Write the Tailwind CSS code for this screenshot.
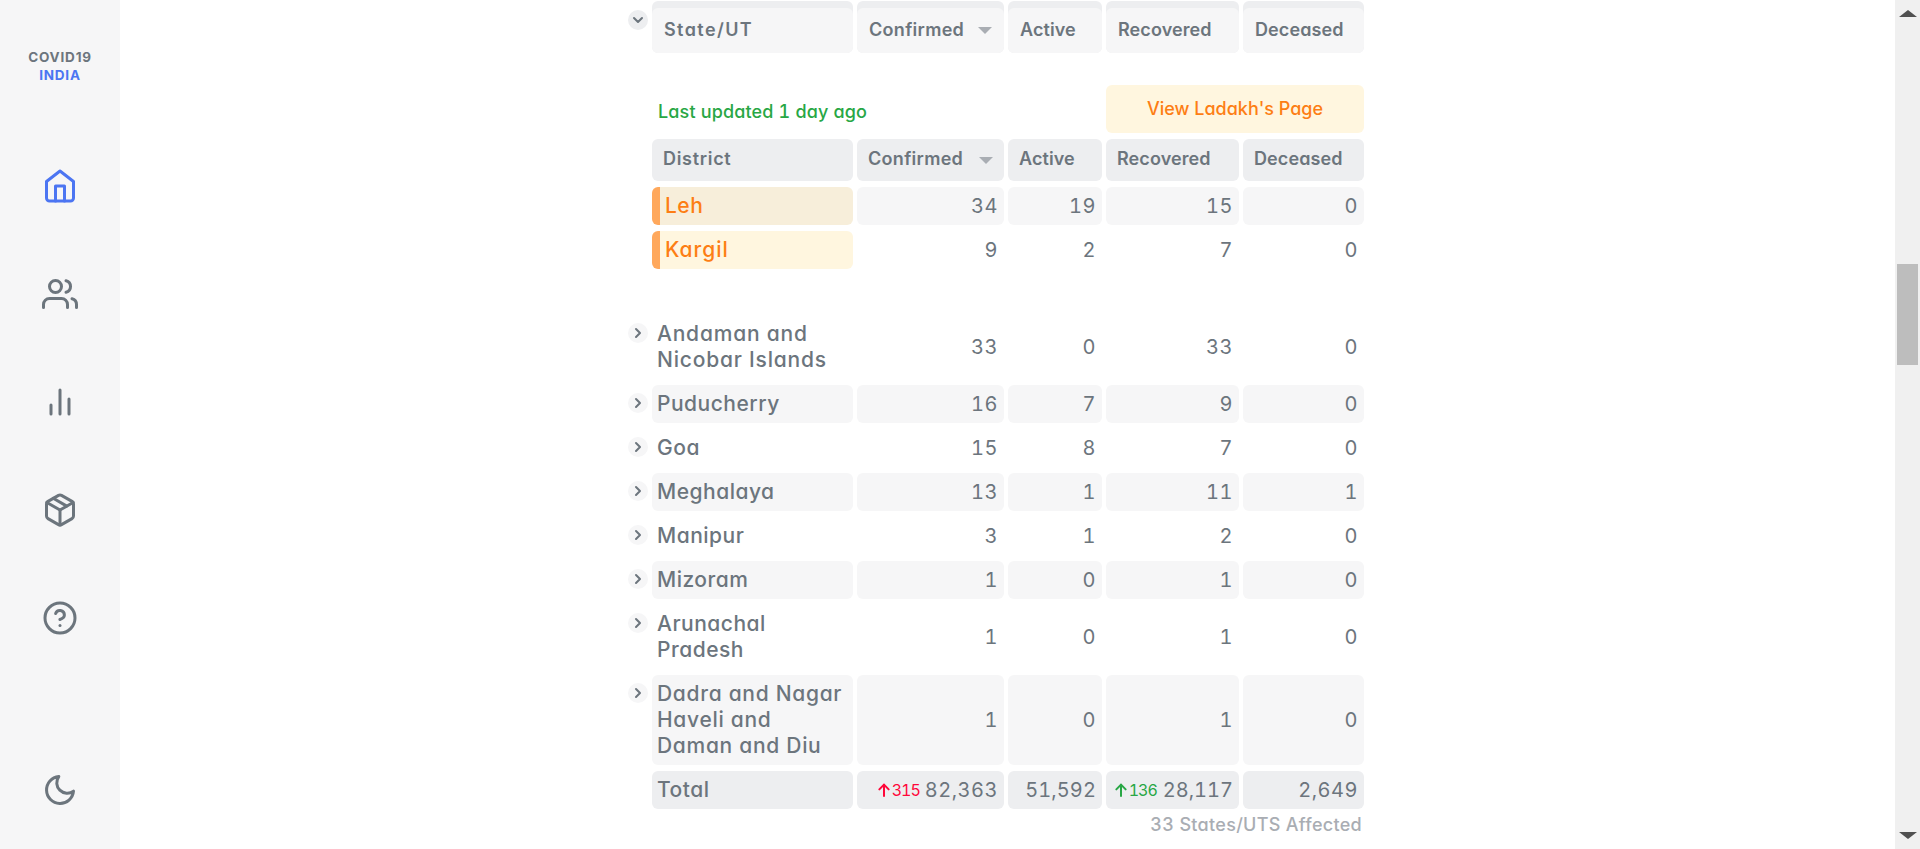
<!DOCTYPE html>
<html lang="en" class="h-[849px] overflow-hidden">
<head>
    <meta charset="UTF-8">
    <meta name="viewport" content="width=device-width, initial-scale=1.0">
    <title>COVID19 India</title>
    <script src="https://cdn.jsdelivr.net/npm/@tailwindcss/browser@4"></script>
</head>
<body class="h-[849px] overflow-hidden bg-white font-['Inter',sans-serif] text-[#6c757d] [font-feature-settings:'cv11']">
<div class="flex h-[849px]">

    <!-- Sidebar -->
    <nav class="flex w-[120px] shrink-0 flex-col items-center bg-[#f6f6f7] pt-[48px] pb-[41px]">
        <div class="text-center text-[13.5px] leading-[18px] font-bold tracking-[0.8px]">
            <div>COVID19</div>
            <div class="text-[#4c75f2]">INDIA</div>
        </div>
        <div class="mt-[84px] flex flex-col items-center gap-[72px]">
            <svg class="size-9 text-[#4c75f2]" viewBox="0 0 24 24" fill="none" stroke="currentColor" stroke-width="2" stroke-linecap="round" stroke-linejoin="round"><path d="M3 9l9-7 9 7v11a2 2 0 0 1-2 2H5a2 2 0 0 1-2-2z"/><polyline points="9 22 9 12 15 12 15 22"/></svg>
            <svg class="size-9" viewBox="0 0 24 24" fill="none" stroke="currentColor" stroke-width="2" stroke-linecap="round" stroke-linejoin="round"><path d="M17 21v-2a4 4 0 0 0-4-4H5a4 4 0 0 0-4 4v2"/><circle cx="9" cy="7" r="4"/><path d="M23 21v-2a4 4 0 0 0-3-3.87"/><path d="M16 3.13a4 4 0 0 1 0 7.75"/></svg>
            <svg class="size-9" viewBox="0 0 24 24" fill="none" stroke="currentColor" stroke-width="2" stroke-linecap="round" stroke-linejoin="round"><line x1="18" y1="20" x2="18" y2="10"/><line x1="12" y1="20" x2="12" y2="4"/><line x1="6" y1="20" x2="6" y2="14"/></svg>
            <svg class="size-9" viewBox="0 0 24 24" fill="none" stroke="currentColor" stroke-width="2" stroke-linecap="round" stroke-linejoin="round"><line x1="16.5" y1="9.4" x2="7.5" y2="4.21"/><path d="M21 16V8a2 2 0 0 0-1-1.73l-7-4a2 2 0 0 0-2 0l-7 4A2 2 0 0 0 3 8v8a2 2 0 0 0 1 1.73l7 4a2 2 0 0 0 2 0l7-4A2 2 0 0 0 21 16z"/><polyline points="3.27 6.96 12 12.01 20.73 6.96"/><line x1="12" y1="22.08" x2="12" y2="12"/></svg>
            <svg class="size-9" viewBox="0 0 24 24" fill="none" stroke="currentColor" stroke-width="2" stroke-linecap="round" stroke-linejoin="round"><circle cx="12" cy="12" r="10"/><path d="M9.09 9a3 3 0 0 1 5.83 1c0 2-3 3-3 3"/><line x1="12" y1="17" x2="12.01" y2="17"/></svg>
        </div>
        <svg class="mt-auto size-9" viewBox="0 0 24 24" fill="none" stroke="currentColor" stroke-width="2" stroke-linecap="round" stroke-linejoin="round"><path d="M21 12.79A9 9 0 1 1 11.21 3 7 7 0 0 0 21 12.79z"/></svg>
    </nav>

    <!-- Table -->
    <main class="min-w-0 flex-1 pt-px pl-[508px] text-[20px] leading-[26px] tracking-[0.5px] [font-feature-settings:'cv11','tnum']">
        <div class="w-[736px]">

            <!-- State header -->
            <div class="grid grid-cols-[20px_201px_147px_94px_133px_121px] gap-x-[4px] text-[18px] font-semibold">
                <span class="mt-[9px] flex size-5 items-center justify-center rounded-full bg-[#edeef0]">
                    <svg class="size-4" viewBox="0 0 24 24" fill="none" stroke="currentColor" stroke-width="3" stroke-linecap="round" stroke-linejoin="round"><polyline points="6 9 12 15 18 9"/></svg>
                </span>
                <div class="rounded-md bg-[#edeef0] pt-[7px]"><div class="flex h-[45px] items-center rounded-md bg-[#f6f6f7] px-3 pb-[2px] tracking-[1.4px]">State/UT</div></div>
                <div class="rounded-md bg-[#edeef0] pt-[7px]"><div class="flex h-[45px] items-center justify-between rounded-md bg-[#f6f6f7] pr-[12px] pb-[2px] pl-3 tracking-[0.3px]">Confirmed<span class="mt-[2px] border-x-[7px] border-t-[7px] border-x-transparent border-t-[#a9adb3]"></span></div></div>
                <div class="rounded-md bg-[#edeef0] pt-[7px]"><div class="flex h-[45px] items-center rounded-md bg-[#f6f6f7] px-3 pb-[2px] tracking-[0.1px]">Active</div></div>
                <div class="rounded-md bg-[#edeef0] pt-[7px]"><div class="flex h-[45px] items-center rounded-md bg-[#f6f6f7] px-3 pb-[2px] tracking-[0.1px]">Recovered</div></div>
                <div class="rounded-md bg-[#edeef0] pt-[7px]"><div class="flex h-[45px] items-center rounded-md bg-[#f6f6f7] px-3 pb-[2px] tracking-[0.1px]">Deceased</div></div>
            </div>

            <!-- Districts of Ladakh -->
            <div class="mt-[32px] pl-[24px]">
                <div class="flex h-[48px] items-end justify-between">
                    <span class="pb-[9px] pl-[6px] text-[18px] leading-[24px] font-medium tracking-[0.15px] text-[#28a745]">Last updated 1 day ago</span>
                    <a class="flex h-[48px] w-[258px] items-center justify-center rounded-md bg-[#fff6df] text-[18px] font-medium tracking-normal text-[#fd7e14]">View Ladakh's Page</a>
                </div>
                <div class="mt-[6px] grid grid-cols-[201px_147px_94px_133px_121px] gap-x-[4px] text-[18px] font-semibold">
                    <div class="flex h-[42px] items-center rounded-md bg-[#edeef0] px-[11px] pb-[2px] tracking-[0.7px]">District</div>
                    <div class="flex h-[42px] items-center justify-between rounded-md bg-[#edeef0] pr-[11px] pb-[2px] pl-[11px] tracking-[0.3px]">Confirmed<span class="mt-[2px] border-x-[7px] border-t-[7px] border-x-transparent border-t-[#a9adb3]"></span></div>
                    <div class="flex h-[42px] items-center rounded-md bg-[#edeef0] px-[11px] pb-[2px] tracking-[0.1px]">Active</div>
                    <div class="flex h-[42px] items-center rounded-md bg-[#edeef0] px-[11px] pb-[2px] tracking-[0.1px]">Recovered</div>
                    <div class="flex h-[42px] items-center rounded-md bg-[#edeef0] px-[11px] pb-[2px] tracking-[0.1px]">Deceased</div>
                </div>
                <div class="mt-[6px] grid grid-cols-[201px_147px_94px_133px_121px] gap-x-[4px] gap-y-[6px]">
                    <div class="flex items-center rounded-md border-l-[8px] border-[#ffa85c] bg-[#f7eeda] py-[6px] pl-[5px] text-[21px] font-medium text-[#fd7e14]">Leh</div>
                    <div class="rounded-md bg-[#f6f6f7] px-[6px] py-[6px] text-right">34</div>
                    <div class="rounded-md bg-[#f6f6f7] px-[6px] py-[6px] text-right">19</div>
                    <div class="rounded-md bg-[#f6f6f7] px-[6px] py-[6px] text-right">15</div>
                    <div class="rounded-md bg-[#f6f6f7] px-[6px] py-[6px] text-right">0</div>
                    <div class="flex items-center rounded-md border-l-[8px] border-[#ffa85c] bg-[#fff6df] py-[6px] pl-[5px] text-[21px] font-medium tracking-[1px] text-[#fd7e14]">Kargil</div>
                    <div class="px-[6px] py-[6px] text-right">9</div>
                    <div class="px-[6px] py-[6px] text-right">2</div>
                    <div class="px-[6px] py-[6px] text-right">7</div>
                    <div class="px-[6px] py-[6px] text-right">0</div>
                </div>
            </div>

            <!-- Remaining states -->
            <div class="mt-[46px] grid grid-cols-[20px_201px_147px_94px_133px_121px] gap-x-[4px] gap-y-[6px]">
                <span class="mt-[8px] flex size-5 items-center justify-center rounded-full bg-[#f6f6f7]"><svg class="size-4" viewBox="0 0 24 24" fill="none" stroke="currentColor" stroke-width="3" stroke-linecap="round" stroke-linejoin="round"><polyline points="9 6 15 12 9 18"/></svg></span>
                <div class="px-[5px] py-[6px] text-[21px] font-medium tracking-[0.8px]">Andaman and Nicobar Islands</div>
                <div class="flex items-center justify-end px-[6px]">33</div>
                <div class="flex items-center justify-end px-[6px]">0</div>
                <div class="flex items-center justify-end px-[6px]">33</div>
                <div class="flex items-center justify-end px-[6px]">0</div>

                <span class="mt-[8px] flex size-5 items-center justify-center rounded-full bg-[#f6f6f7]"><svg class="size-4" viewBox="0 0 24 24" fill="none" stroke="currentColor" stroke-width="3" stroke-linecap="round" stroke-linejoin="round"><polyline points="9 6 15 12 9 18"/></svg></span>
                <div class="rounded-md bg-[#f6f6f7] px-[5px] py-[6px] text-[21px] font-medium">Puducherry</div>
                <div class="flex items-center justify-end rounded-md bg-[#f6f6f7] px-[6px]">16</div>
                <div class="flex items-center justify-end rounded-md bg-[#f6f6f7] px-[6px]">7</div>
                <div class="flex items-center justify-end rounded-md bg-[#f6f6f7] px-[6px]">9</div>
                <div class="flex items-center justify-end rounded-md bg-[#f6f6f7] px-[6px]">0</div>

                <span class="mt-[8px] flex size-5 items-center justify-center rounded-full bg-[#f6f6f7]"><svg class="size-4" viewBox="0 0 24 24" fill="none" stroke="currentColor" stroke-width="3" stroke-linecap="round" stroke-linejoin="round"><polyline points="9 6 15 12 9 18"/></svg></span>
                <div class="px-[5px] py-[6px] text-[21px] font-medium">Goa</div>
                <div class="flex items-center justify-end px-[6px]">15</div>
                <div class="flex items-center justify-end px-[6px]">8</div>
                <div class="flex items-center justify-end px-[6px]">7</div>
                <div class="flex items-center justify-end px-[6px]">0</div>

                <span class="mt-[8px] flex size-5 items-center justify-center rounded-full bg-[#f6f6f7]"><svg class="size-4" viewBox="0 0 24 24" fill="none" stroke="currentColor" stroke-width="3" stroke-linecap="round" stroke-linejoin="round"><polyline points="9 6 15 12 9 18"/></svg></span>
                <div class="rounded-md bg-[#f6f6f7] px-[5px] py-[6px] text-[21px] font-medium">Meghalaya</div>
                <div class="flex items-center justify-end rounded-md bg-[#f6f6f7] px-[6px]">13</div>
                <div class="flex items-center justify-end rounded-md bg-[#f6f6f7] px-[6px]">1</div>
                <div class="flex items-center justify-end rounded-md bg-[#f6f6f7] px-[6px]">11</div>
                <div class="flex items-center justify-end rounded-md bg-[#f6f6f7] px-[6px]">1</div>

                <span class="mt-[8px] flex size-5 items-center justify-center rounded-full bg-[#f6f6f7]"><svg class="size-4" viewBox="0 0 24 24" fill="none" stroke="currentColor" stroke-width="3" stroke-linecap="round" stroke-linejoin="round"><polyline points="9 6 15 12 9 18"/></svg></span>
                <div class="px-[5px] py-[6px] text-[21px] font-medium">Manipur</div>
                <div class="flex items-center justify-end px-[6px]">3</div>
                <div class="flex items-center justify-end px-[6px]">1</div>
                <div class="flex items-center justify-end px-[6px]">2</div>
                <div class="flex items-center justify-end px-[6px]">0</div>

                <span class="mt-[8px] flex size-5 items-center justify-center rounded-full bg-[#f6f6f7]"><svg class="size-4" viewBox="0 0 24 24" fill="none" stroke="currentColor" stroke-width="3" stroke-linecap="round" stroke-linejoin="round"><polyline points="9 6 15 12 9 18"/></svg></span>
                <div class="rounded-md bg-[#f6f6f7] px-[5px] py-[6px] text-[21px] font-medium">Mizoram</div>
                <div class="flex items-center justify-end rounded-md bg-[#f6f6f7] px-[6px]">1</div>
                <div class="flex items-center justify-end rounded-md bg-[#f6f6f7] px-[6px]">0</div>
                <div class="flex items-center justify-end rounded-md bg-[#f6f6f7] px-[6px]">1</div>
                <div class="flex items-center justify-end rounded-md bg-[#f6f6f7] px-[6px]">0</div>

                <span class="mt-[8px] flex size-5 items-center justify-center rounded-full bg-[#f6f6f7]"><svg class="size-4" viewBox="0 0 24 24" fill="none" stroke="currentColor" stroke-width="3" stroke-linecap="round" stroke-linejoin="round"><polyline points="9 6 15 12 9 18"/></svg></span>
                <div class="px-[5px] py-[6px] text-[21px] font-medium">Arunachal<br>Pradesh</div>
                <div class="flex items-center justify-end px-[6px]">1</div>
                <div class="flex items-center justify-end px-[6px]">0</div>
                <div class="flex items-center justify-end px-[6px]">1</div>
                <div class="flex items-center justify-end px-[6px]">0</div>

                <span class="mt-[8px] flex size-5 items-center justify-center rounded-full bg-[#f6f6f7]"><svg class="size-4" viewBox="0 0 24 24" fill="none" stroke="currentColor" stroke-width="3" stroke-linecap="round" stroke-linejoin="round"><polyline points="9 6 15 12 9 18"/></svg></span>
                <div class="rounded-md bg-[#f6f6f7] px-[5px] py-[6px] text-[21px] font-medium tracking-[0.7px]">Dadra and Nagar<br>Haveli and<br>Daman and Diu</div>
                <div class="flex items-center justify-end rounded-md bg-[#f6f6f7] px-[6px]">1</div>
                <div class="flex items-center justify-end rounded-md bg-[#f6f6f7] px-[6px]">0</div>
                <div class="flex items-center justify-end rounded-md bg-[#f6f6f7] px-[6px]">1</div>
                <div class="flex items-center justify-end rounded-md bg-[#f6f6f7] px-[6px]">0</div>

                <!-- Total -->
                <div></div>
                <div class="rounded-md bg-[#edeef0] px-[5px] py-[6px] text-[21px] font-medium">Total</div>
                <div class="flex items-center justify-end rounded-md bg-[#edeef0] px-[6px]">
                    <svg class="size-4 text-[#ff073a]" viewBox="0 0 24 24" fill="none" stroke="currentColor" stroke-width="3" stroke-linecap="round" stroke-linejoin="round"><line x1="12" y1="21" x2="12" y2="4"/><polyline points="5 11 12 4 19 11"/></svg>
                    <span class="mr-[5px] text-[16px] tracking-[-1px] text-[#ff073a]">315</span>82,363
                </div>
                <div class="flex items-center justify-end rounded-md bg-[#edeef0] px-[6px] tracking-[0.1px]">51,592</div>
                <div class="flex items-center justify-end rounded-md bg-[#edeef0] px-[6px] tracking-normal">
                    <svg class="size-4 text-[#28a745]" viewBox="0 0 24 24" fill="none" stroke="currentColor" stroke-width="3" stroke-linecap="round" stroke-linejoin="round"><line x1="12" y1="21" x2="12" y2="4"/><polyline points="5 11 12 4 19 11"/></svg>
                    <span class="mr-[6px] text-[16px] tracking-[-1px] text-[#28a745]">136</span>28,117
                </div>
                <div class="flex items-center justify-end rounded-md bg-[#edeef0] px-[6px]">2,649</div>
            </div>

            <p class="mt-[4px] pr-[2px] text-right text-[18px] leading-[24px] font-medium tracking-[0.3px] text-[#a9adb3]">33 States/UTS Affected</p>
        </div>
    </main>

    <!-- Scrollbar -->
    <div class="flex w-[25px] shrink-0 flex-col items-center justify-between bg-[#f0f0f0] py-[10px]">
        <span class="border-x-[9px] border-b-[7px] border-x-transparent border-b-[#505050]"></span>
        <span class="border-x-[9px] border-t-[7px] border-x-transparent border-t-[#505050]"></span>
    </div>
</div>
<div class="absolute top-[264px] right-[2px] h-[101px] w-[21px] bg-[#bdbdbd]"></div>
</body>
</html>
